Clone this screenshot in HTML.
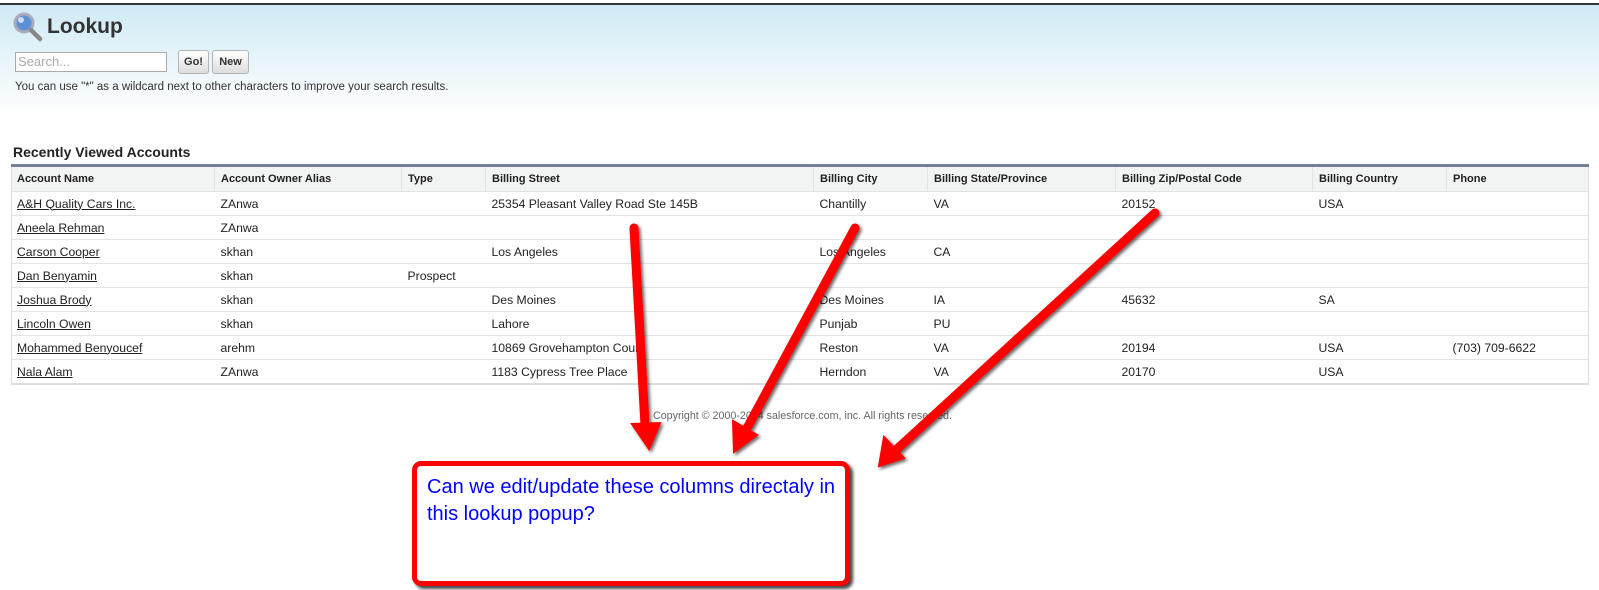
<!DOCTYPE html>
<html><head><style>
body{margin:0;width:1599px;height:590px;overflow:hidden;background:#fff;font-family:"Liberation Sans",Arial,sans-serif;position:relative}
.top{position:absolute;left:0;top:3px;width:1599px;height:110px;background:linear-gradient(#cfeaf5,#fff);border-top:2px solid #333}
h1{position:absolute;left:47px;top:15px;margin:0;font-size:21px;color:#333;font-weight:bold}
.inp{position:absolute;left:15px;top:52px;width:152px;height:20px;border:1px solid #aaa;background:#fff;font-size:13px;color:#aaa;line-height:18px;padding-left:2px;box-sizing:border-box}
.btn{position:absolute;top:50px;height:24px;box-sizing:border-box;border:1px solid #b5b5b5;border-radius:3px;background:linear-gradient(#fff,#ddd);font-size:11px;font-weight:bold;color:#333;line-height:22px;text-align:center}
.hint{position:absolute;left:15px;top:81px;font-size:11.5px;color:#333}
.rv{position:absolute;left:13px;top:144px;font-size:14px;font-weight:bold;color:#222}
table{position:absolute;left:11px;top:164px;width:1577px;table-layout:fixed;border-collapse:collapse;border-top:3px solid #747e96;color:#222;border-left:1px solid #ddd;border-right:1px solid #ddd;border-bottom:2px solid #ddd}
th{background:#f2f3f3;text-align:left;height:24px;padding:0 6px;font-weight:bold;border-right:1px solid #e0e3e5;border-bottom:1px solid #e0e3e5;font-size:11px;white-space:nowrap;overflow:hidden}
td{height:23px;padding:0 6px;border-bottom:1px solid #e3e3e3;font-size:12.2px;white-space:nowrap;overflow:hidden}
td:first-child,th:first-child{padding-left:5px}
td a{color:#222;text-decoration:underline}
.copy{position:absolute;left:653px;top:410px;font-size:10.7px;color:#666}
.box{position:absolute;left:412px;top:461px;width:428px;height:115px;border:5px solid #f00;border-radius:9px;background:#fff;box-shadow:3px 3px 3px #444}
.box div{position:absolute;left:10px;top:8px;font-family:"Liberation Sans",sans-serif;font-size:20px;color:#00f;line-height:27px}
</style></head><body>
<div class="top"></div>
<svg style="position:absolute;left:12px;top:11px" width="32" height="32" viewBox="0 0 32 32"><circle cx="12" cy="12" r="9" fill="#5b8fd6" stroke="#aab" stroke-width="3"/><circle cx="9" cy="9" r="3" fill="#cde"/><line x1="19" y1="19" x2="28" y2="28" stroke="#888" stroke-width="4.5" stroke-linecap="round"/></svg>
<h1>Lookup</h1>
<div class="inp">Search...</div>
<div class="btn" style="left:178px;width:31px">Go!</div>
<div class="btn" style="left:212px;width:37px">New</div>
<div class="hint">You can use "*" as a wildcard next to other characters to improve your search results.</div>
<div class="rv">Recently Viewed Accounts</div>
<table>
<colgroup><col style="width:203px"><col style="width:187px"><col style="width:84px"><col style="width:328px"><col style="width:114px"><col style="width:188px"><col style="width:197px"><col style="width:134px"><col style="width:142px"></colgroup>
<tr><th>Account Name</th><th>Account Owner Alias</th><th>Type</th><th>Billing Street</th><th>Billing City</th><th>Billing State/Province</th><th>Billing Zip/Postal Code</th><th>Billing Country</th><th>Phone</th></tr>
<tr><td><a>A&amp;H Quality Cars Inc.</a></td><td>ZAnwa</td><td></td><td>25354 Pleasant Valley Road Ste 145B</td><td>Chantilly</td><td>VA</td><td>20152</td><td>USA</td><td></td></tr>
<tr><td><a>Aneela Rehman</a></td><td>ZAnwa</td><td></td><td></td><td></td><td></td><td></td><td></td><td></td></tr>
<tr><td><a>Carson Cooper</a></td><td>skhan</td><td></td><td>Los Angeles</td><td>Los Angeles</td><td>CA</td><td></td><td></td><td></td></tr>
<tr><td><a>Dan Benyamin</a></td><td>skhan</td><td>Prospect</td><td></td><td></td><td></td><td></td><td></td><td></td></tr>
<tr><td><a>Joshua Brody</a></td><td>skhan</td><td></td><td>Des Moines</td><td>Des Moines</td><td>IA</td><td>45632</td><td>SA</td><td></td></tr>
<tr><td><a>Lincoln Owen</a></td><td>skhan</td><td></td><td>Lahore</td><td>Punjab</td><td>PU</td><td></td><td></td><td></td></tr>
<tr><td><a>Mohammed Benyoucef</a></td><td>arehm</td><td></td><td>10869 Grovehampton Court</td><td>Reston</td><td>VA</td><td>20194</td><td>USA</td><td>(703) 709-6622</td></tr>
<tr><td><a>Nala Alam</a></td><td>ZAnwa</td><td></td><td>1183 Cypress Tree Place</td><td>Herndon</td><td>VA</td><td>20170</td><td>USA</td><td></td></tr>
</table>
<div class="copy">Copyright © 2000-2014 salesforce.com, inc. All rights reserved.</div>
<svg style="position:absolute;left:0;top:0" width="1599" height="590">
<defs><filter id="s"><feDropShadow dx="2" dy="2" stdDeviation="1.5" flood-color="#000" flood-opacity="0.6"/></filter></defs>
<g filter="url(#s)" fill="#f00" stroke="#f00" stroke-width="9" stroke-linecap="round">
<line x1="634" y1="228" x2="645" y2="425"/>
<polygon stroke-width="2" points="632,424 660,423 649,449"/>
<line x1="855" y1="228" x2="746" y2="430"/>
<polygon stroke-width="2" points="733,421 757,435 734,452"/>
<line x1="1155" y1="213" x2="896" y2="450"/>
<polygon stroke-width="2" points="884,437 904,458 879,466"/>
</g>
</svg>
<div class="box"><div>Can we edit/update these columns directaly in<br>this lookup popup?</div></div>
</body></html>
